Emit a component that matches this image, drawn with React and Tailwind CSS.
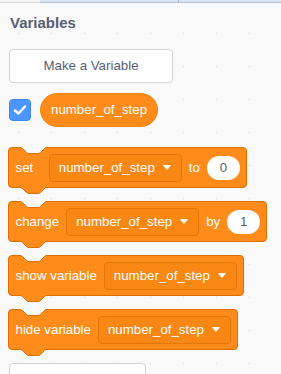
import React from 'react';

const FONT = { fontFamily: '"Liberation Sans", Arial, Helvetica, sans-serif' };

// scratch-style notch, 27px wide, 6px deep
const NOTCH =
  'c1.5,0 2.25,.75 3,1.5 l3,3 c.75,.75 1.5,1.5 3,1.5 h9 c1.5,0 2.25,-.75 3,-1.5 l3,-3 c.75,-.75 1.5,-1.5 3,-1.5';

function Notch({ fill, className }) {
  return (
    <svg width="27" height="8" viewBox="0 0 27 8" className={`absolute left-[11px] overflow-visible ${className}`}>
      <path d={`M0,0 L0,0.5 ${NOTCH} L27,0 Z`} fill={fill} />
      <path d={`M0,0.5 ${NOTCH}`} fill="none" stroke="#db6e00" strokeWidth="1" />
    </svg>
  );
}

function Block({ children, className = '' }) {
  return (
    <div
      className={`relative flex h-[41px] w-fit items-center gap-[7px] rounded-[4px] border border-[#db6e00] bg-[#ff8c1a] pl-[6.5px] pr-[6px] text-[13.3px] text-white ${className}`}
    >
      <Notch fill="#f9f9f9" className="top-[-1px]" />
      <Notch fill="#ff8c1a" className="top-full" />
      {children}
    </div>
  );
}

function Dropdown() {
  return (
    <div className="flex h-[28px] w-[133px] items-center rounded-[4px] border border-[#e27608] bg-[#f98714] pl-[9px] pr-[10px]">
      <span className="whitespace-nowrap">number_of_step</span>
      <svg width="8" height="5" viewBox="0 0 8 5" className="ml-auto">
        <path d="M0.5,0.5 L7.5,0.5 L4,4.5 Z" fill="#fff" stroke="#fff" strokeWidth="0.8" strokeLinejoin="round" />
      </svg>
    </div>
  );
}

function Oval({ value }) {
  return (
    <div className="flex h-[24px] w-[33px] items-center justify-center rounded-full bg-white text-[#575e75]">
      {value}
    </div>
  );
}

export default function App() {
  return (
    <div
      style={FONT}
      className="h-[374px] w-[281px] overflow-hidden bg-[#f9f9f9] bg-[radial-gradient(circle,#ededed_1px,transparent_1.3px)] bg-[length:33px_33px] bg-[position:2px_17px]"
    >
      {/* tab strip */}
      <div className="flex h-[3px]">
        <div className="w-[40px] border-b border-[#d9d9d9] bg-[#f4f4f4]" />
        <div className="w-[139px] border-b border-r border-[#b4c0d6] bg-[#d9e3f2]" />
        <div className="flex-1 border-b border-[#b4c0d6] bg-[#d9e3f2]" />
      </div>

      <div className="flex flex-col items-start px-[8px]">
        <div className="ml-[2px] mt-[10.5px] text-[15px] font-bold leading-[18px] text-[#575e75]">Variables</div>

        <button className="ml-[1px] mt-[17.5px] flex h-[34px] w-[164px] items-center justify-center rounded-[4px] border border-[#d3d3d3] bg-white text-[13.3px] text-[#575e75]">
          Make a Variable
        </button>

        <div className="ml-[1px] mt-[10px] flex h-[34px] items-center">
          <div className="flex h-[22px] w-[22px] items-center justify-center rounded-[4px] border border-[#3f86eb] bg-[#4c97ff]">
            <svg width="14" height="12" viewBox="0 0 14 12">
              <path d="M2,6.5 L5.5,9.5 L12,2.5" fill="none" stroke="#fff" strokeWidth="2.4" strokeLinecap="round" strokeLinejoin="round" />
            </svg>
          </div>
          <div className="ml-[9px] flex h-[34px] items-center rounded-full border border-[#f08510] bg-[#ff8c1a] px-[10px] text-[13.3px] text-white">
            number_of_step
          </div>
        </div>

        <Block className="mt-[20px]">
          <span className="mr-[8.5px]">set</span>
          <Dropdown />
          <span>to</span>
          <Oval value="0" />
        </Block>

        <Block className="mt-[13px]">
          <span>change</span>
          <Dropdown />
          <span>by</span>
          <Oval value="1" />
        </Block>

        <Block className="mt-[13px]">
          <span className="whitespace-nowrap">show variable</span>
          <Dropdown />
        </Block>

        <Block className="mt-[13px]">
          <span className="whitespace-nowrap">hide variable</span>
          <Dropdown />
        </Block>

        <button className="ml-[1px] mt-[13px] h-[34px] w-[137px] shrink-0 rounded-[4px] border border-[#d3d3d3] bg-white" />
      </div>
    </div>
  );
}
